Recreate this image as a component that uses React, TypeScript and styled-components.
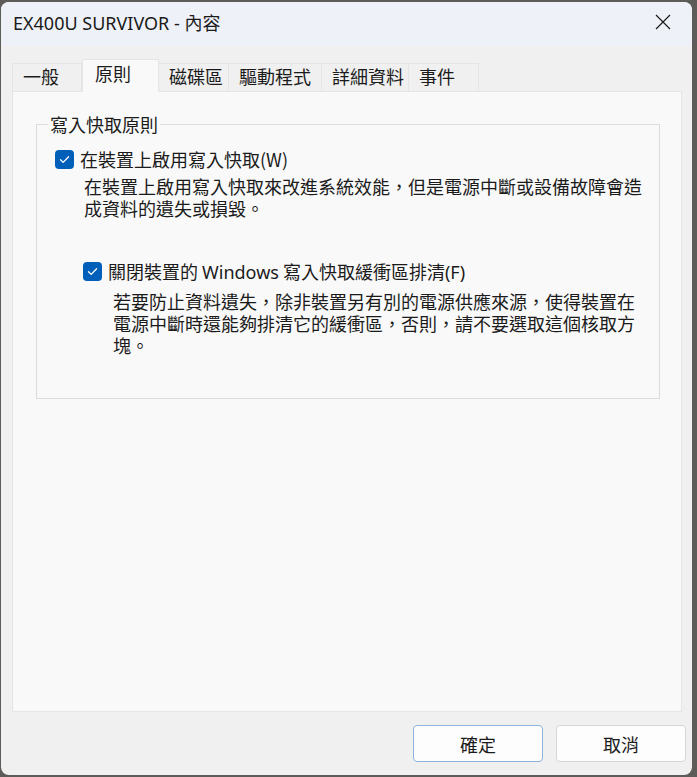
import React from "react";
import styled, { createGlobalStyle } from "styled-components";

const GlobalStyle = createGlobalStyle`
  html, body {
    margin: 0;
    padding: 0;
    background: #5e5c58;
  }
  body {
    font-family: "Noto Sans CJK TC", "Noto Sans", sans-serif;
    color: #1b1b1b;
  }
`;

const tabs = [
  { label: "一般", width: 70 },
  { label: "原則", width: 77, active: true },
  { label: "磁碟區", width: 70 },
  { label: "驅動程式", width: 93 },
  { label: "詳細資料", width: 87 },
  { label: "事件", width: 70 },
];

const Check = () => (
  <CheckBox>
    <svg width="19" height="19" viewBox="0 0 19 19">
      <path d="M5.5 9.8 L8.2 12.4 L13.6 6.8" fill="none" stroke="#fff" strokeWidth="1.3" strokeLinecap="round" strokeLinejoin="round" />
    </svg>
  </CheckBox>
);

const App = () => {
  return (
    <>
      <GlobalStyle />
      <Window lang="zh-TW">
        <TitleBar>
          <Title>EX400U SURVIVOR - 內容</Title>
          <CloseButton>
            <svg width="16" height="16" viewBox="0 0 16 16">
              <path d="M1 1 L15 15 M15 1 L1 15" stroke="#1a1a1a" strokeWidth="1.2" />
            </svg>
          </CloseButton>
        </TitleBar>

        <Body>
          <TabRow>
            {tabs.map((t) => (
              <Tab key={t.label} $active={!!t.active} $width={t.width}>
                {t.label}
              </Tab>
            ))}
          </TabRow>

          <Panel>
            <Group>
              <Legend>寫入快取原則</Legend>
              <OptionRow>
                <Check />
                <OptionLabel>在裝置上啟用寫入快取(W)</OptionLabel>
              </OptionRow>
              <Description $indent={29} $top={5}>
                在裝置上啟用寫入快取來改進系統效能，但是電源中斷或設備故障會造成資料的遺失或損毀。
              </Description>

              <OptionRow $indent={28} $top={41}>
                <Check />
                <OptionLabel>
                  關閉裝置的 <Latin>Windows</Latin> 寫入快取緩衝區排清<Latin>(F)</Latin>
                </OptionLabel>
              </OptionRow>
              <Description $indent={58} $top={8}>
                若要防止資料遺失，除非裝置另有別的電源供應來源，使得裝置在電源中斷時還能夠排清它的緩衝區，否則，請不要選取這個核取方塊。
              </Description>
            </Group>
          </Panel>

          <Footer>
            <Button $primary>確定</Button>
            <Button>取消</Button>
          </Footer>
        </Body>
      </Window>
    </>
  );
};

export default App;

const Window = styled.div`
  margin: 2px 5px 2px 1px;
  width: 691px;
  height: 773px;
  border-radius: 8px;
  overflow: hidden;
  background: #f0f0f0;
  display: flex;
  flex-direction: column;
  font-size: 18px;
`;

const TitleBar = styled.div`
  height: 44px;
  flex-shrink: 0;
  background: #eef2f8;
  display: flex;
  align-items: center;
  justify-content: space-between;
  padding: 0 12px 0 12px;
`;

const Title = styled.div`
  font-family: "Noto Sans", "Noto Sans CJK TC", sans-serif;
  font-size: 18px;
  line-height: 22px;
  margin-top: -2px;
  color: #1a1a1a;
`;

const Latin = styled.span`
  font-family: "Noto Sans", sans-serif;
`;

const CloseButton = styled.div`
  width: 16px;
  height: 16px;
  display: flex;
  margin-right: 9px;
  margin-top: -4px;
`;

const Body = styled.div`
  flex: 1;
  display: flex;
  flex-direction: column;
  padding: 14px 10px 0 11px;
`;

const TabRow = styled.div`
  display: flex;
  align-items: flex-end;
  height: 32px;
  position: relative;
  z-index: 1;
  margin-bottom: -1px;
`;

const Tab = styled.div<{ $active: boolean; $width: number }>`
  box-sizing: border-box;
  flex-shrink: 0;
  width: ${(p) => p.$width}px;
  height: ${(p) => (p.$active ? 33 : 29)}px;
  padding: ${(p) => (p.$active ? "2px 0 0 12px" : "1px 0 0 10px")};
  line-height: 22px;
  font-size: 18px;
  white-space: nowrap;
  color: #1b1b1b;
  background: ${(p) => (p.$active ? "#f9f9f9" : "#f0f0f0")};
  border: 1px solid #e5e5e5;
  border-left: ${(p) => (p.$active ? "1px solid #e5e5e5" : "none")};
  border-bottom: ${(p) => (p.$active ? "none" : "1px solid #e5e5e5")};
  &:first-child {
    border-left: 1px solid #e5e5e5;
  }
`;

const Panel = styled.div`
  height: 621px;
  box-sizing: border-box;
  background: #f9f9f9;
  border: 1px solid #e5e5e5;
  padding: 21px 21px 0 23px;
`;

const Group = styled.fieldset`
  margin: 0;
  padding: 13px 14px 42px 18px;
  border: 1px solid #dcdcdc;
  border-radius: 0;
  min-width: 0;
`;

const Legend = styled.legend`
  margin-left: -7px;
  padding: 0 2px;
  line-height: 22px;
  font-size: 18px;
  color: #1b1b1b;
`;

const OptionRow = styled.div<{ $indent?: number; $top?: number }>`
  display: flex;
  align-items: center;
  gap: 6px;
  margin-left: ${(p) => p.$indent ?? 0}px;
  margin-top: ${(p) => p.$top ?? 0}px;
  height: 22px;
`;

const CheckBox = styled.span`
  width: 19px;
  height: 19px;
  border-radius: 4px;
  background: #005fb8;
  display: inline-flex;
  flex-shrink: 0;
`;

const OptionLabel = styled.span`
  line-height: 22px;
  font-size: 18px;
  white-space: nowrap;
`;

const Description = styled.p<{ $indent: number; $top: number }>`
  margin: ${(p) => p.$top}px 0 0 ${(p) => p.$indent}px;
  line-height: 22px;
  font-size: 18px;
  color: #1b1b1b;
`;

const Footer = styled.div`
  display: flex;
  justify-content: flex-end;
  gap: 13px;
  padding-top: 13px;
  margin-right: -4px;
`;

const Button = styled.button<{ $primary?: boolean }>`
  width: 130px;
  height: 37px;
  box-sizing: border-box;
  border-radius: 4px;
  background: #fdfdfd;
  border: 1px solid ${(p) => (p.$primary ? "#8db4dc" : "#d6d6d6")};
  font-family: inherit;
  font-size: 18px;
  color: #1b1b1b;
  padding: 0;
`;
